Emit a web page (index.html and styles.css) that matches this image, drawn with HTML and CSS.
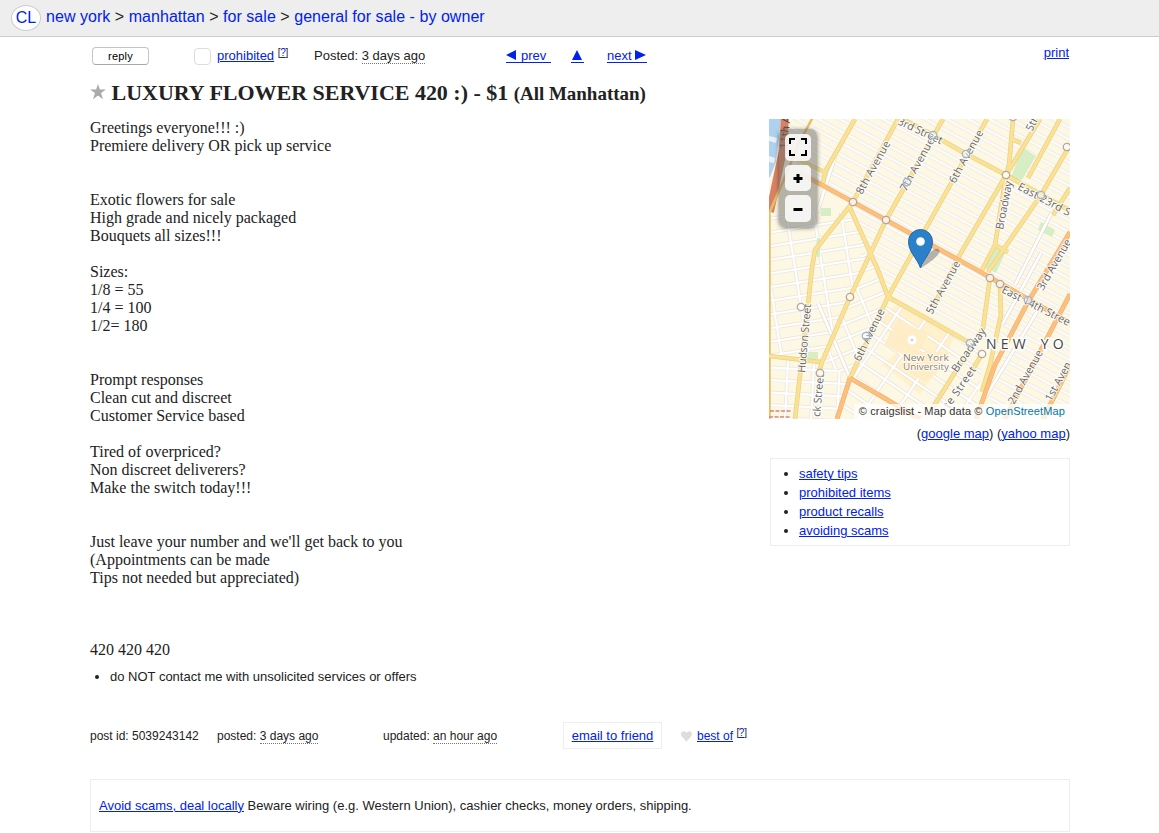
FILE: index.html
```html
<!DOCTYPE html>
<html lang="en">
<head>
<meta charset="utf-8">
<title>LUXURY FLOWER SERVICE 420 :)</title>
<link rel="stylesheet" href="styles.css">
</head>
<body>
<header class="topbar">
  <a class="logo" href="#">CL</a>
  <nav class="crumbs"><a href="#">new york</a> &gt; <a href="#">manhattan</a> &gt; <a href="#">for sale</a> &gt; <a href="#">general for sale - by owner</a></nav>
</header>
<main class="page">
  <div class="tools">
    <button class="reply">reply</button>
    <span class="flagbox"></span>
    <span class="flag"><a href="#">prohibited</a> <sup>[<a href="#">?</a>]</sup></span>
    <span class="date">Posted: <time>3 days ago</time></span>
    <a class="pager prev" href="#"><svg width="11" height="10" viewBox="0 0 11 10"><path d="M0 5 10 0V10Z"/></svg>prev&nbsp;</a>
    <a class="pager up" href="#"><svg width="12" height="10" viewBox="0 0 12 10"><path d="M1 10 6 0 11 10Z"/></svg></a>
    <a class="pager next" href="#">next <svg width="11" height="10" viewBox="0 0 11 10"><path d="M0 0 11 5 0 10Z"/></svg></a>
    <a class="print" href="#">print</a>
  </div>
  <h2 class="title"><svg class="star" width="16" height="16" viewBox="0 0 16 16"><path d="M8 0 9.9 5.6H16L11 9.1 13 15.3 9.5 12.8A1.6 1.6 0 0 0 6.5 12.8L3 15.3 5 9.1 0 5.6H6.1Z"/></svg><span>LUXURY FLOWER SERVICE 420 :) - $1 <small>(All Manhattan)</small></span></h2>
  <div class="content">
    <div class="left">
      <section class="body">Greetings everyone!!! :)
Premiere delivery OR pick up service


Exotic flowers for sale
High grade and nicely packaged
Bouquets all sizes!!!

Sizes:
1/8 = 55
1/4 = 100
1/2= 180


Prompt responses
Clean cut and discreet
Customer Service based

Tired of overpriced?
Non discreet deliverers?
Make the switch today!!!


Just leave your number and we'll get back to you
(Appointments can be made
Tips not needed but appreciated)



420 420 420</section>
      <ul class="notices"><li>do NOT contact me with unsolicited services or offers</li></ul>
      <div class="info">
        <span class="pid">post id: 5039243142</span>
        <span class="posted">posted: <time>3 days ago</time></span>
        <span class="updated">updated: <time>an hour ago</time></span>
        <span class="email"><a href="#">email to friend</a></span>
        <svg class="heart" width="11" height="11" viewBox="0 0 11 11"><path d="M5.5 11C4 8 0 6 0 3 0-.5 4.500-.8 5.500 2.300 6.500-.8 11-.5 11 3 11 6 7 8 5.500 11Z"/></svg>
        <span class="best"><a href="#">best of</a> <sup>[<a href="#">?</a>]</sup></span>
      </div>
    </div>
    <aside class="side">
      <div class="map">
        <svg width="301" height="300" viewBox="769 119 301 300">
          <defs>
            <pattern id="chelsea" width="66" height="10.200" patternUnits="userSpaceOnUse" patternTransform="translate(853 202) rotate(28.500)">
              <path class="case" d="M0 5H66"/><path class="lane" d="M0 5H66"/>
            </pattern>
            <pattern id="village" width="27" height="13.500" patternUnits="userSpaceOnUse" patternTransform="translate(776 212) rotate(-9)">
              <path class="case" d="M0 6H27M10 0V13.500"/><path class="lane" d="M0 6H27M10 0V13.500"/>
            </pattern>
            <pattern id="hudson" width="26" height="12.500" patternUnits="userSpaceOnUse" patternTransform="translate(776 362) rotate(3)">
              <path class="case" d="M0 6H26M12 0V12.500"/><path class="lane" d="M0 6H26M12 0V12.500"/>
            </pattern>
            <pattern id="central" width="25" height="14" patternUnits="userSpaceOnUse" patternTransform="translate(850 300) rotate(-22)">
              <path class="case" d="M0 6H25M11 0V14"/><path class="lane" d="M0 6H25M11 0V14"/>
            </pattern>
            <pattern id="soho" width="27" height="15" patternUnits="userSpaceOnUse" patternTransform="translate(888 302) rotate(34)">
              <path class="case" d="M0 6H27M14 0V15"/><path class="lane" d="M0 6H27M14 0V15"/>
            </pattern>
          </defs>
          <rect class="land" x="769" y="119" width="301" height="300"/>
          <path fill="url(#chelsea)" d="M786 119H1070V419H985L1000 360 985 345 888 297 878 270 853 205 823 190 773 160Z"/>
          <path fill="url(#village)" d="M769 212H848L870 252 863 265 822 362 769 355Z"/>
          <path fill="url(#hudson)" d="M769 358 822 363 850 378 837 419H769Z"/>
          <path fill="url(#central)" d="M853 208 888 297 850 378 822 362 863 265Z"/>
          <path class="campus" d="M878 322 896 305 928 320 955 337 936 372 920 394 882 365 903 347Z"/>
          <path fill="url(#soho)" d="M888 298 985 345 975 419H837L850 378Z"/>
          <path class="campusmid" d="M898 319 928 334 915 361 884 345Z"/>
          <path class="campusmid" d="M905 352H950L936 374 925 382 905 370Z"/>
          <path class="water" d="M769 119H781L776 162 770 177H769Z"/>
          <path class="pier" d="M769 136 777 138 776 143 769 141ZM769 156 775 158 774 163 769 162Z"/>
          <g class="park">
            <path d="M1022 147 1036 156 1022 180 1011 178Z"/>
            <path d="M1041 222 1055 230 1052 237 1038 230Z"/>
            <path d="M996 246 1006 251 996 273 985 268Z"/>
            <path d="M821 208H831V216H821ZM806 352H818V359H806ZM817 238H820V257H817Z"/>
          </g>
          <path class="minor" d="M1052 212 1015 285M1041 253 1002 325M835 157 818 210M1038 310 985 398M818 303 850 378"/>
          <path class="minorfill" d="M1052 212 1015 285M1041 253 1002 325M835 157 818 210M1038 310 985 398M818 303 850 378"/>
          <path class="highway" d="M785 115 783 150 776 183 770 212"/>
          <path class="ramp" d="M814 115 798 145 788 170 775 200 769 214M769.500 214V419"/>
          <path class="ycase" d="M898 119 853 202 815 250 812 268 808 305 795 419M850 208 878 270 888 297 970 343M855 119 825 172 823 184M795 158 825 172M943 119 886 220 850 297 822 362 818 375M987 119 925 230 888 297 850 378M895 115 933 135 966 154 1006 175 1070 211M1013 119 1009 165 1006 175M1040 119 1006 175 958 258 930 313M1012 139 1021 143M1060 119 1028 178M1070 145 1041 195 988 272M1006 175 995 245 982 270M995 245 1008 252M990 278 983 328 932 409M1000 284 1001 315 990 365 982 392M769 356 820 362M1070 188 1053 215M982 354 970 374"/>
          <path class="yfill" d="M898 119 853 202 815 250 812 268 808 305 795 419M850 208 878 270 888 297 970 343M855 119 825 172 823 184M795 158 825 172M943 119 886 220 850 297 822 362 818 375M987 119 925 230 888 297 850 378M895 115 933 135 966 154 1006 175 1070 211M1013 119 1009 165 1006 175M1040 119 1006 175 958 258 930 313M1012 139 1021 143M1060 119 1028 178M1070 145 1041 195 988 272M1006 175 995 245 982 270M995 245 1008 252M990 278 983 328 932 409M1000 284 1001 315 990 365 982 392M769 356 820 362M1070 188 1053 215M982 354 970 374"/>
          <path class="ocase" d="M800 173 853 202 886 220 977 270 1070 323M1070 232 1028 302 995 365 976 419M1070 294 1005 419M1070 365 1043 419M850 378 920 419M850 378 837 419"/>
          <path class="ofill" d="M800 173 853 202 886 220 977 270 1070 323M1070 232 1028 302 995 365 976 419M1070 294 1005 419M1070 365 1043 419M850 378 920 419M850 378 837 419"/>
          <path class="ferry" d="M770 411H792M769 417H790"/>
          <g class="names">
            <text class="dark" transform="translate(787 149) rotate(-84)" textLength="38">11th Av</text>
            <text transform="translate(862 195) rotate(-61)" textLength="59">8th Avenue</text>
            <text transform="translate(906 192) rotate(-61)" textLength="59">7th Avenue</text>
            <text transform="translate(955 184) rotate(-61)" textLength="59">6th Avenue</text>
            <text transform="translate(932 315) rotate(-61)" textLength="59">5th Avenue</text>
            <text transform="translate(860 362) rotate(-64)" textLength="57">6th Avenue</text>
            <text transform="translate(1032 132) rotate(-63)">5th</text>
            <text transform="translate(897 124) rotate(25)" textLength="48">3rd Street</text>
            <text transform="translate(1003 230) rotate(-79)" textLength="49">Broadway</text>
            <text transform="translate(1017 189) rotate(28)" textLength="58">East 23rd S</text>
            <text transform="translate(1001 292) rotate(27)" textLength="75">East 14th Stree</text>
            <text transform="translate(1043 291) rotate(-60)" textLength="57">3rd Avenue</text>
            <text transform="translate(1014 405) rotate(-61)" textLength="60">2nd Avenue</text>
            <text transform="translate(1051 402) rotate(-61)">1st Aven</text>
            <text transform="translate(957 373) rotate(-55)" textLength="51">Broadway</text>
            <text transform="translate(949 409) rotate(-55)" textLength="48">te Street</text>
            <text transform="translate(805 373) rotate(-85)" textLength="69">Hudson Street</text>
            <text transform="translate(820 417) rotate(-85)" textLength="43">ck Street</text>
          </g>
          <g class="stops">
            <circle cx="853" cy="202" r="3.700"/><circle cx="886" cy="220" r="3.700"/><circle cx="1006" cy="175" r="3.700"/><circle cx="990" cy="278" r="3.700"/><circle cx="1000" cy="284" r="3.700"/><circle cx="982" cy="354" r="3.700"/><circle cx="1067" cy="147" r="3.700"/><circle cx="850" cy="297" r="3.700"/><circle cx="801" cy="307" r="3.700"/><circle cx="820" cy="373" r="3.700"/><circle cx="1013" cy="117" r="3.700"/>
          </g>
          <g class="stops blue">
            <circle cx="907" cy="182" r="3.700"/><circle cx="933" cy="135" r="3.700"/><circle cx="966" cy="154" r="3.700"/><circle cx="1041" cy="195" r="3.700"/><circle cx="1028" cy="300" r="3.700"/><circle cx="970" cy="343" r="3.700"/><circle cx="866" cy="336" r="3.700"/>
          </g>
          <circle cx="912" cy="340" r="4.500" fill="#fff"/><circle cx="912" cy="340" r="1.300" fill="#b9cfe6"/>
          <g class="nyu"><text x="903" y="361" textLength="46" lengthAdjust="spacingAndGlyphs">New York</text><text x="903" y="370" textLength="46" lengthAdjust="spacingAndGlyphs">University</text></g>
          <text class="city" x="986" y="349">NEW YO</text>
          <path class="pinshadow" d="M921 268C926 256 933 247 938 249 943 252 934 260 921 268Z"/>
          <path class="pin" d="M920.500 268C917 258 908.500 252 908.500 241.500A12 12 0 0 1 932.500 241.500C932.500 252 924 258 920.500 268Z"/>
          <circle cx="920.500" cy="241.500" r="4.300" fill="#fff"/>
        </svg>
        <div class="zoombox">
          <span class="zoombtn"><svg width="18" height="18" viewBox="0 0 18 18"><path d="M1 6V1H6M12 1H17V6M17 12V17H12M6 17H1V12"/></svg></span>
          <span class="zoombtn"><svg width="18" height="18" viewBox="0 0 18 18"><path class="heavy" d="M4.500 9.500H13.500M9 5V14"/></svg></span>
          <span class="zoombtn"><svg width="18" height="18" viewBox="0 0 18 18"><path class="heavy" d="M4.500 9.500H13.500"/></svg></span>
        </div>
        <div class="credit">© craigslist - Map data © <a href="#">OpenStreetMap</a></div>
      </div>
      <p class="maplinks">(<a href="#">google map</a>) (<a href="#">yahoo map</a>)</p>
      <ul class="tips">
        <li><a href="#">safety tips</a></li>
        <li><a href="#">prohibited items</a></li>
        <li><a href="#">product recalls</a></li>
        <li><a href="#">avoiding scams</a></li>
      </ul>
    </aside>
  </div>
  <div class="warning"><a href="#">Avoid scams, deal locally</a> Beware wiring (e.g. Western Union), cashier checks, money orders, shipping.</div>
</main>
</body>
</html>
```
FILE: styles.css
```css
* { box-sizing: border-box; }
body { margin: 0; height: 833px; overflow: hidden; background: #fff; color: #222; font: 13px/18px "Liberation Sans", Arial, sans-serif; }
a { color: #0021ee; text-decoration: underline; text-underline-offset: 1px; text-decoration-thickness: 1px; }
ul { margin: 0; padding: 0; }
svg { display: block; }
.topbar { display: flex; height: 37px; padding-left: 11px; background: #eee; border-bottom: 1px solid #ccc; font-size: 16px; }
.topbar a { text-decoration: none; }
.logo { width: 30px; height: 26px; margin: 5px 5px 0 0; border: 1px solid #ccc; border-radius: 50%; background: #fff; line-height: 24px; text-align: center; }
.crumbs { padding-top: 8px; letter-spacing: .04px; }
.page { width: 980px; margin-left: 90px; }
.tools { display: flex; height: 44px; padding-top: 10px; }
.reply { width: 57px; height: 18px; margin: 0 0 0 2px; padding: 0; border: 1px solid #c4c4c4; border-bottom-color: #aaa; border-radius: 4px; background: #fff; color: #000; font: 11px/15px "Liberation Sans", Arial, sans-serif; letter-spacing: .2px; }
.flagbox { width: 17px; height: 17px; margin: 1px 6px 0 45px; border: 1px solid #ddd; border-radius: 4px; }
.flag { width: 97px; white-space: nowrap; }
sup { font-size: 10px; line-height: 0; vertical-align: 4px; letter-spacing: -.3px; }
time { border-bottom: 1px dotted #777; }
.date { width: 192px; }
.pager { display: flex; height: 16px; padding-top: 3px; align-items: center; gap: 4px; border-bottom: 1px solid #0021ee; text-decoration: none; }
.pager svg { fill: #0021ee; margin-top: -3px; }
.prev { width: 45px; margin-right: 20px; }
.up { width: 13px; margin-right: 23px; }
.next { gap: 3px; width: 40px; }
.print { margin: -3px 1px 0 auto; }
.title { display: flex; margin: 0; height: 38px; font: bold 22px/23px "Liberation Serif", "Times New Roman", serif; letter-spacing: -.02px; }
.title small { font-size: 19px; }
.star { margin: 3px 5.5px 0 0; fill: #aaa; }
.content { display: flex; justify-content: space-between; height: 660px; }
.body { height: 549px; font: 16px/18px "Liberation Serif", "Times New Roman", serif; white-space: pre; }
.notices { padding-left: 20px; }
.info { display: flex; height: 27px; margin-top: 36px; line-height: 27px; font-size: 12px; white-space: nowrap; }
.info > span { padding-top: 1px; }
.info time { line-height: 14px; }
.pid { width: 127px; }
.posted { width: 166px; }
.updated { width: 180px; }
.info > .email { width: 99px; padding-top: 0; border: 1px solid #eee; line-height: 25px; font-size: 13px; text-align: center; }
.heart { margin: 9px 5px 0 19px; fill: #ddd; }
.side { width: 301px; }
.map { position: relative; width: 301px; height: 300px; overflow: hidden; }
.land { fill: #fcf8e4; }
.case { fill: none; stroke: #e9e4da; stroke-width: 3.6; }
.lane { fill: none; stroke: #fff; stroke-width: 2.2; }
.minor { fill: none; stroke: #e2ddd5; stroke-width: 4; }
.minorfill { fill: none; stroke: #fff; stroke-width: 2.6; }
.water { fill: #aed1ef; }
.pier { fill: #e8f1fa; }
.campus { fill: #fff1cc; }
.campusmid { fill: #ffedc8; }
.park { fill: #d7edc3; }
.highway { fill: none; stroke: #d98263; stroke-width: 8; }
.ramp { fill: none; stroke: #e9bd68; stroke-width: 2.5; }
.ycase { fill: none; stroke: #e8d08a; stroke-width: 4.6; stroke-linejoin: round; }
.yfill { fill: none; stroke: #fbe292; stroke-width: 3.2; stroke-linejoin: round; }
.ocase { fill: none; stroke: #edb069; stroke-width: 4.8; stroke-linejoin: round; }
.ofill { fill: none; stroke: #fcbf7d; stroke-width: 3.6; stroke-linejoin: round; }
.ferry { fill: none; stroke: #d18b78; stroke-width: 1.5; stroke-dasharray: 4 1.5; }
.stops { fill: #fff; fill-opacity: .75; stroke: #b3a69b; stroke-width: 1.3; }
.blue { fill-opacity: .35; stroke: #9fb4cf; }
.names { fill: #666; stroke: #fff; stroke-opacity: .85; stroke-width: 2px; paint-order: stroke; font: 10.8px "Open Sans", "Noto Sans", sans-serif; }
.names .dark { fill: #444; stroke: none; }
.nyu { fill: #8d8068; stroke: #fff; stroke-width: 1.5px; paint-order: stroke; font: 9.5px "Open Sans", "Noto Sans", sans-serif; }
.city { fill: #444; stroke: #fff; stroke-width: 3px; paint-order: stroke; font: 14px "Open Sans", "Noto Sans", sans-serif; letter-spacing: 4.2px; word-spacing: 3px; }
.pin { fill: #2a81c9; stroke: #2469a5; stroke-width: 1; }
.pinshadow { fill: #333; opacity: .35; }
.zoombox { position: absolute; left: 10px; top: 10px; display: flex; flex-direction: column; gap: 4px; width: 38px; height: 98px; padding: 5px 6px; border-radius: 7px; background: rgba(110,110,105,.5); box-shadow: 0 1px 4px rgba(0,0,0,.5); }
.zoombtn { display: flex; justify-content: center; align-items: center; width: 26px; height: 27px; border-radius: 5px; background: rgba(255,255,255,.85); }
.zoombtn path { fill: none; stroke: #000; stroke-width: 2; }
.zoombtn .heavy { stroke-width: 3; }
.credit { position: absolute; right: 0; bottom: 0; height: 15px; padding: 0 5px; background: rgba(255,255,255,.75); color: #333; font-size: 11px; line-height: 15px; letter-spacing: .12px; white-space: nowrap; }
.credit a { color: #0078a8; text-decoration: none; }
.maplinks { margin: 6px 0 15px; text-align: right; }
.tips { height: 88px; margin-left: 1px; padding: 5px 0 0 28px; border: 1px solid #eee; line-height: 19px; }
.warning { height: 53px; padding-left: 8px; border: 1px solid #eee; line-height: 51px; }
```
